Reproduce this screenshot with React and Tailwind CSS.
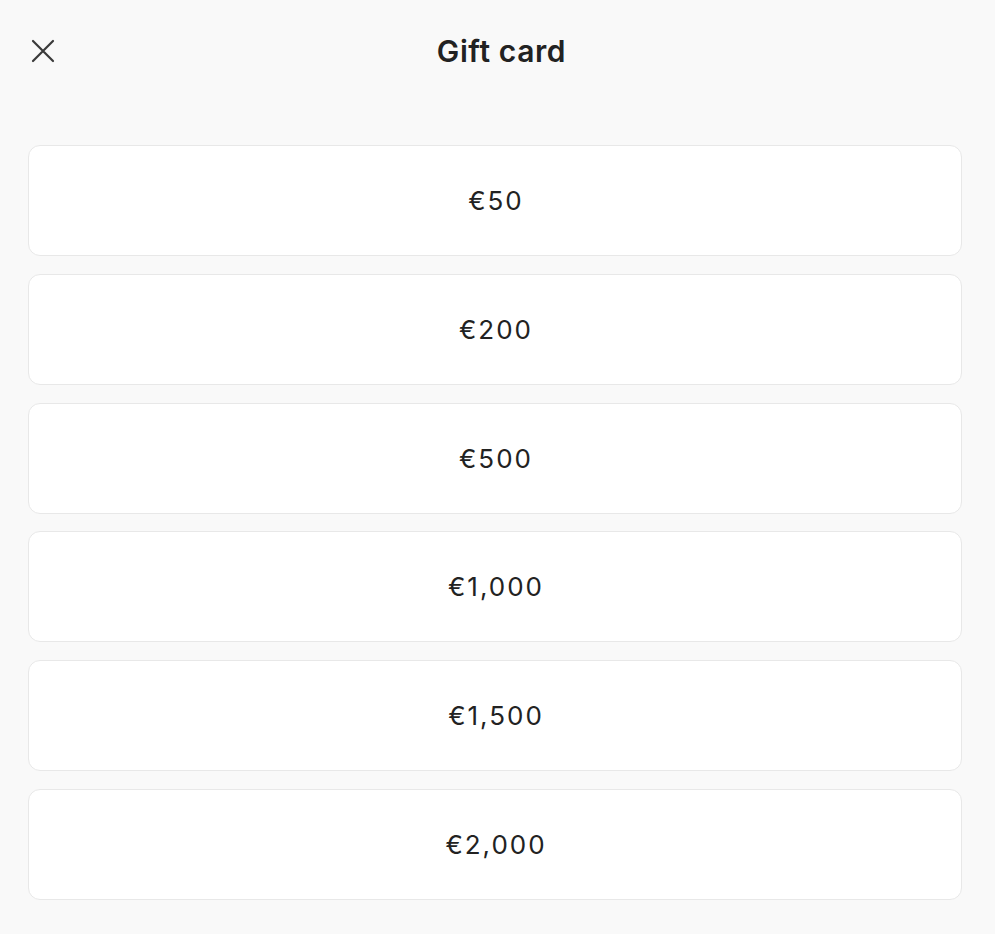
import React from "react";

const amounts = ["€50", "€200", "€500", "€1,000", "€1,500", "€2,000"];

const App = () => {
  return (
    <div
      className="min-h-[934px] bg-[#f9f9f9] text-[#222222]"
      style={{ fontFamily: "Inter, 'Noto Sans', sans-serif" }}
    >
      <header className="relative flex h-[104px] items-center justify-center pb-[2px]">
        <button className="absolute left-[29px] top-[37px] p-[2px] text-[#3a3a3a]">
          <svg width="24" height="24" viewBox="0 0 24 24" fill="none">
            <path d="M2 2L22 22M22 2L2 22" stroke="currentColor" strokeWidth="2.2" strokeLinecap="round" />
          </svg>
        </button>
        <h1 className="pl-[8px] text-[30px] font-semibold tracking-[0.6px]">Gift card</h1>
      </header>

      <div className="flex flex-col gap-[17.8px] pl-[28px] pr-[33px] pt-[41px]">
        {amounts.map((amount) => (
          <button
            key={amount}
            className="flex h-[111px] items-center justify-center rounded-[12px] border border-[#e8e8e8] bg-white pl-[2px] text-[26px] tracking-[2px]"
          >
            {amount}
          </button>
        ))}
      </div>
    </div>
  );
};

export default App;
